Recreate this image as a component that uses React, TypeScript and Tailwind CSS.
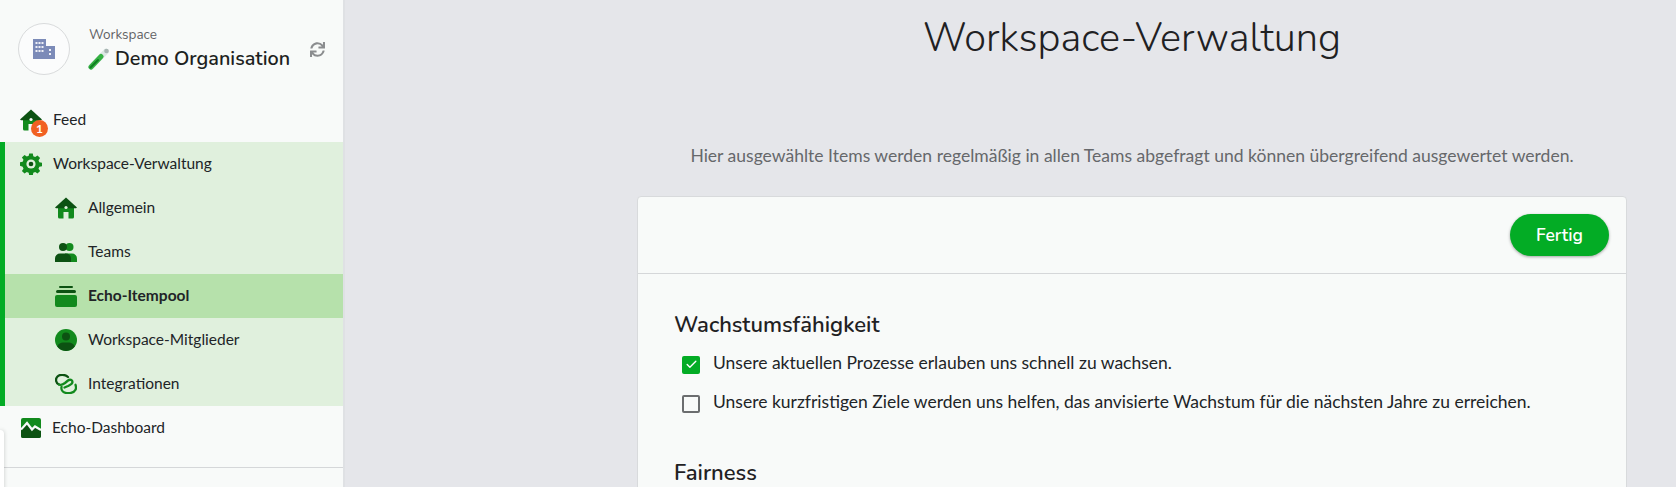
import React from "react";
import { Check } from "lucide-react";
import { FaSync } from "react-icons/fa";

const G = "#128a1d";
const D = "#0c5212";

const HomeIcon = ({ dot }: { dot?: boolean }) => (
  <svg viewBox="0 0 22 22" className="w-[22px] h-[22px]">
    <path d="M3 10h16v10a1.500 1.500 0 0 1-1.500 1.500H13.500V15h-5v6.500H4.500A1.500 1.500 0 0 1 3 20z" fill={G} />
    <path d="M11 .5 22 10.500l-1 .8H1l-1-.8z" fill={D} />
    <circle cx="11" cy="10.500" r="1.600" fill={dot ? "#f8faf9" : "#e0f0dd"} />
  </svg>
);

const GearIcon = () => (
  <svg viewBox="0 0 22 22" className="w-[22px] h-[22px]">
    <path
      d="M9.200.5h3.600l.5 2.700 1.900.8 2.300-1.600 2.600 2.600-1.600 2.300.8 1.900 2.700.5v3.600l-2.700.5-.8 1.900 1.600 2.300-2.600 2.600-2.300-1.600-1.900.8-.5 2.700H9.200l-.5-2.700-1.900-.8-2.300 1.600-2.600-2.600 1.600-2.300-.8-1.900L0 12.800V9.200l2.700-.5.8-1.900-1.600-2.300 2.600-2.600 2.300 1.600 1.900-.8z"
      fill={G}
    />
    <circle cx="11" cy="11" r="4.600" fill="#e0f0dd" />
    <circle cx="11" cy="11" r="2.300" fill={D} />
  </svg>
);

const TeamsIcon = () => (
  <svg viewBox="0 0 22 20" className="w-[22px] h-[20px]">
    <circle cx="14.500" cy="5" r="4" fill={G} />
    <path d="M10 11.500h7a5 5 0 0 1 5 5V20H10z" fill={G} />
    <circle cx="8" cy="5" r="4" fill={D} />
    <path d="M5 11.500h6a5 5 0 0 1 5 5V20H0v-3.500a5 5 0 0 1 5-5z" fill={D} />
  </svg>
);

const PoolIcon = () => (
  <svg viewBox="0 0 22 22" className="w-[22px] h-[22px]">
    <rect x="0" y="10" width="22" height="12" rx="2" fill={G} />
    <rect x="1" y="5" width="20" height="3" rx="1.500" fill={D} />
    <rect x="4" y="1" width="14" height="2" rx="1" fill={D} />
  </svg>
);

const MemberIcon = () => (
  <svg viewBox="0 0 22 22" className="w-[22px] h-[22px]">
    <circle cx="11" cy="11" r="11" fill={G} />
    <circle cx="11" cy="7.500" r="4" fill={D} />
    <path d="M2.200 17.500C3.500 14.500 6 13.500 8 13.500h6c2 0 4.500 1 5.800 4a11 11 0 0 1-17.600 0z" fill={D} />
  </svg>
);

const IntegrationIcon = () => (
  <svg viewBox="0 0 22 20" className="w-[22px] h-[20px]" fill="none" strokeWidth="2.300" strokeLinecap="round">
    <path d="M13 3C10 .3 5 0 2.500 2.500 0 5 .8 9 4 10.500" stroke={D} />
    <path d="M4 10.500C6 11.500 8 10.500 10 9l3-2.500c2-1.500 4.500-.5 4.500 1.500S15 11 13 12l-3.500 1.500" stroke={G} />
    <path d="M6.500 13C6 15.500 7.500 18 10.500 18.800s8.500.2 10-3c.8-1.500.5-3.500 0-5" stroke={G} />
  </svg>
);

const DashIcon = () => (
  <svg viewBox="0 0 20 20" className="w-5 h-5">
    <rect width="20" height="20" rx="2" fill={G} />
    <path d="M0 12 6 5.500l5 6.500 3-3 6 4V18a2 2 0 0 1-2 2H2a2 2 0 0 1-2-2z" fill={D} />
    <path d="M0 11.500 6 5l5 6.500 3-3 6 3.500" fill="none" stroke="#f8faf9" strokeWidth="2.200" />
  </svg>
);

const BuildingIcon = () => (
  <svg viewBox="0 0 22 20" className="w-[22px] h-5">
    <path d="M0 0h13v20H0z" fill="#7c8bb8" />
    <path d="M13 7h9v13h-9z" fill="#7c8bb8" />
    <g fill="#eef0f6">
      <rect x="2.500" y="3" width="2" height="2" />
      <rect x="5.500" y="3" width="2" height="2" />
      <rect x="8.500" y="3" width="2" height="2" />
      <rect x="2.500" y="7" width="2" height="2" />
      <rect x="5.500" y="7" width="2" height="2" />
      <rect x="8.500" y="7" width="2" height="2" />
      <rect x="2.500" y="11" width="2" height="2" />
      <rect x="5.500" y="11" width="2" height="2" />
      <rect x="8.500" y="11" width="2" height="2" />
      <rect x="16" y="10" width="2" height="2" />
      <rect x="16" y="14" width="2" height="2" />
    </g>
  </svg>
);

const TubeIcon = () => (
  <svg viewBox="0 0 22 22" className="w-[22px] h-[22px] shrink-0">
    <path d="M3 19 18 3.500" stroke="#dce7e4" strokeWidth="5.500" strokeLinecap="round" />
    <path d="M3 19 13 8.500" stroke="#35b143" strokeWidth="5" strokeLinecap="round" />
    <path d="M2.500 19.500 10 12" stroke="#0f7f22" strokeWidth="2" strokeLinecap="round" />
    <circle cx="18.500" cy="3" r="2.300" fill="#a8b4b2" />
  </svg>
);

const subItems = [
  { label: "Allgemein", icon: <HomeIcon /> },
  { label: "Teams", icon: <TeamsIcon /> },
  { label: "Echo-Itempool", icon: <PoolIcon />, active: true },
  { label: "Workspace-Mitglieder", icon: <MemberIcon /> },
  { label: "Integrationen", icon: <IntegrationIcon /> },
];

const Sidebar = () => (
  <aside className="relative w-[345px] shrink-0 h-full bg-[#f8faf9] border-r-2 border-[#dfe1e4] text-[15.500px] text-[#212427]">
    <div className="flex items-start h-[98px] pl-[18px] pt-[23px]">
      <div className="w-[52px] h-[52px] rounded-full border border-[#d9dbdc] bg-[#fbfcfc] flex items-center justify-center">
        <BuildingIcon />
      </div>
      <div className="ml-[19px] w-[218px]">
        <div className="font-['Nunito','Lato',sans-serif] text-[13.500px] leading-[16px] mt-[4px] text-[#5f6164]">Workspace</div>
        <div className="flex items-center gap-[5px] mt-[3px] ml-[-1px]">
          <TubeIcon />
          <span className="font-['Nunito','Lato',sans-serif] text-[19.800px] leading-[26px] font-semibold text-[#1d1f21]">
            Demo Organisation
          </span>
        </div>
      </div>
      <FaSync className="w-[15px] h-[15px] mt-[19px] ml-[3px] text-[#8b8d8f]" />
    </div>

    <div className="flex items-center h-[44px] pl-[20px] gap-[11px]">
      <div className="relative w-[22px] h-[22px]">
        <HomeIcon dot />
        <span className="absolute left-[11px] top-[11px] w-[17px] h-[17px] rounded-full bg-[#f16122] text-white text-[12px] font-bold leading-[17px] text-center">
          1
        </span>
      </div>
      <span>Feed</span>
    </div>

    <div className="bg-[#e0f0dd] border-l-[5px] border-[#03ac25]">
      <div className="flex items-center h-[44px] pl-[15px] gap-[11px]">
        <GearIcon />
        <span>Workspace-Verwaltung</span>
      </div>
      {subItems.map((item) => (
        <div
          key={item.label}
          className={`flex items-center h-[44px] pl-[50px] gap-[11px] ${item.active ? "bg-[#b6e1ab] font-bold" : ""}`}
        >
          {item.icon}
          <span>{item.label}</span>
        </div>
      ))}
    </div>

    <div className="flex items-center h-[44px] pl-[21px] gap-[11px]">
      <DashIcon />
      <span>Echo-Dashboard</span>
    </div>

    <div className="border-t border-[#d5d7d9] mt-[17px]" />
    <div className="absolute left-0 top-[430px] w-[4px] h-[70px] bg-white rounded-tr-[5px] shadow-[0_0_4px_rgba(0,0,0,0.2)]" />
  </aside>
);

const Item = ({ text, checked }: { text: string; checked?: boolean }) => (
  <div className="flex items-center h-[39px] pl-[8px] gap-[13px]">
    {checked ? (
      <span className="w-[18px] h-[18px] rounded-[2px] bg-[#03ac25] flex items-center justify-center">
        <Check className="w-[13px] h-[13px] text-white" strokeWidth={2.500} />
      </span>
    ) : (
      <span className="w-[18px] h-[18px] rounded-[2px] border-2 border-[#6b6d6f]" />
    )}
    <span className="mt-[-3px]">{text}</span>
  </div>
);

export default function App() {
  return (
    <div className="flex w-[1676px] h-[487px] overflow-hidden bg-[#e5e6ea] font-['Lato',sans-serif]">
      <Sidebar />
      <main className="flex-1 pl-[292px] pr-[49px]">
        <h1 className="font-['Nunito','Lato',sans-serif] font-light text-[39.800px] leading-[50px] text-center text-[#1f2123] mt-[13px]">
          Workspace-Verwaltung
        </h1>
        <p className="text-center text-[17.550px] leading-[24px] text-[#66686b] mt-[81px]">
          Hier ausgewählte Items werden regelmäßig in allen Teams abgefragt und können übergreifend ausgewertet werden.
        </p>
        <section className="mt-[28px] bg-[#f8faf9] rounded-[4px] border border-[#d8dadc] h-[400px] text-[17.500px] text-[#212427]">
          <div className="flex items-center justify-end h-[77px] pr-[17px] border-b border-[#d5d7d9]">
            <button className="w-[99px] h-[42px] rounded-full bg-[#03ac25] text-white font-['Nunito','Lato',sans-serif] font-semibold text-[17.500px] shadow-[0_1px_3px_rgba(0,0,0,0.35)]">
              Fertig
            </button>
          </div>
          <div className="pl-[36px] pt-[37px]">
            <h2 className="font-['Nunito','Lato',sans-serif] text-[22px] leading-[28px] font-semibold text-[#1f2123] mb-[6px]">
              Wachstumsfähigkeit
            </h2>
            <Item text="Unsere aktuellen Prozesse erlauben uns schnell zu wachsen." checked />
            <Item text="Unsere kurzfristigen Ziele werden uns helfen, das anvisierte Wachstum für die nächsten Jahre zu erreichen." />
            <h2 className="font-['Nunito','Lato',sans-serif] text-[22px] leading-[28px] font-semibold text-[#1f2123] mt-[36px]">
              Fairness
            </h2>
          </div>
        </section>
      </main>
    </div>
  );
}
